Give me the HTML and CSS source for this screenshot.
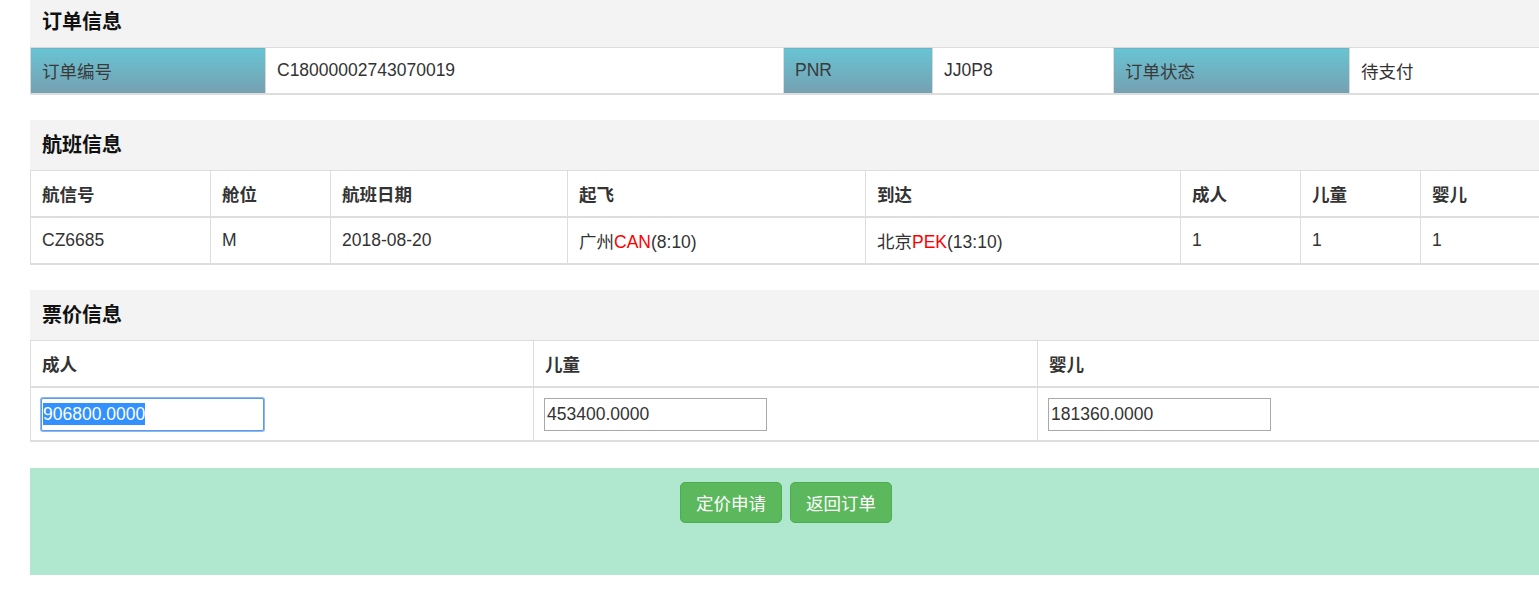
FILE: index.html
```html
<!DOCTYPE html>
<html lang="zh-CN">
<head>
<meta charset="utf-8">
<title>订单信息</title>
<link rel="stylesheet" href="styles.css">
</head>
<body>
<div class="page">
  <section class="panel first">
    <div class="panel-title">订单信息</div>
    <table class="grid order">
      <colgroup><col style="width:235px"><col style="width:518px"><col style="width:149px"><col style="width:181px"><col style="width:236px"><col style="width:193px"></colgroup>
      <tbody>
        <tr>
          <td class="label">订单编号</td><td>C18000002743070019</td>
          <td class="label">PNR</td><td>JJ0P8</td>
          <td class="label">订单状态</td><td>待支付</td>
        </tr>
      </tbody>
    </table>
  </section>

  <section class="panel">
    <div class="panel-title">航班信息</div>
    <table class="grid">
      <colgroup><col style="width:180px"><col style="width:120px"><col style="width:237px"><col style="width:298px"><col style="width:315px"><col style="width:120px"><col style="width:120px"><col style="width:122px"></colgroup>
      <thead>
        <tr><th>航信号</th><th>舱位</th><th>航班日期</th><th>起飞</th><th>到达</th><th>成人</th><th>儿童</th><th>婴儿</th></tr>
      </thead>
      <tbody>
        <tr>
          <td>CZ6685</td><td>M</td><td>2018-08-20</td>
          <td>广州<span class="red">CAN</span>(8:10)</td>
          <td>北京<span class="red">PEK</span>(13:10)</td>
          <td>1</td><td>1</td><td>1</td>
        </tr>
      </tbody>
    </table>
  </section>

  <section class="panel last">
    <div class="panel-title">票价信息</div>
    <table class="grid price">
      <colgroup><col style="width:503px"><col style="width:504px"><col style="width:505px"></colgroup>
      <thead>
        <tr><th>成人</th><th>儿童</th><th>婴儿</th></tr>
      </thead>
      <tbody>
        <tr>
          <td><div class="field focused"><span class="sel">906800.0000</span></div></td>
          <td><input class="field" type="text" value="453400.0000"></td>
          <td><input class="field" type="text" value="181360.0000"></td>
        </tr>
      </tbody>
    </table>
  </section>

  <div class="actions">
    <button class="btn" type="button">定价申请</button>
    <button class="btn" type="button">返回订单</button>
  </div>
</div>
</body>
</html>
```

FILE: styles.css
```css
html, body {
  margin: 0;
  padding: 0;
  background: #fff;
  overflow: hidden;
}

body {
  font-family: "Liberation Sans", "Noto Sans CJK SC", sans-serif;
  font-size: 17.5px;
  color: #333;
}

.page {
  width: 1512px;
  margin-left: 30px;
}

.panel {
  margin-bottom: 25px;
}

.panel.first {
  margin-top: -3px;
}

.panel.last {
  margin-bottom: 26px;
}

.panel-title {
  height: 50px;
  line-height: 50px;
  background: #f3f3f3;
  padding-left: 12px;
  font-size: 20px;
  font-weight: bold;
  color: #111;
}

.grid {
  width: 1512px;
  table-layout: fixed;
  border-collapse: collapse;
  border-bottom: 2px solid #ddd;
}

.grid th,
.grid td {
  border: 1px solid #ddd;
  height: 45px;
  padding: 0 11px;
  text-align: left;
  vertical-align: middle;
  white-space: nowrap;
  overflow: hidden;
}

.grid tr > :last-child {
  border-right: none;
}

.grid th {
  font-weight: bold;
  color: #333;
}

.grid thead th {
  border-bottom: 2px solid #ddd;
}

.grid tbody tr:last-child td {
  border-bottom: 2px solid #ddd;
}

.order td.label {
  background: linear-gradient(#67c4d4, #76a0b1);
  color: #3a3a3a;
  border-color: #d8d8d8;
}

.red {
  color: #f00;
}

.price tbody td {
  height: 52px;
  padding-left: 10px;
}

.field {
  box-sizing: border-box;
  display: block;
  width: 223px;
  height: 33px;
  margin: 0;
  padding: 0 2px;
  border: 1px solid #a9a9a9;
  background: #fff;
  font-family: "Liberation Sans", "Noto Sans CJK SC", sans-serif;
  font-size: 17.5px;
  line-height: 31px;
  color: #333;
  outline: none;
}

.field.focused {
  border: 1px solid #5b9bef;
  border-radius: 2px;
  box-shadow: 0 0 0 1px #8fb8f0;
  padding: 0 1px;
}

.sel {
  background: #3390ff;
  color: #fff;
  line-height: 22px;
  display: inline-block;
}

.actions {
  height: 107px;
  background: #b0e8cf;
  box-sizing: border-box;
  padding-top: 14px;
  display: flex;
  justify-content: center;
  align-items: flex-start;
  gap: 8px;
}

.btn {
  width: 102px;
  height: 41px;
  padding: 0;
  border: 1px solid #4cae4c;
  border-radius: 5px;
  background: #5cb85c;
  color: #fff;
  font-family: "Liberation Sans", "Noto Sans CJK SC", sans-serif;
  font-size: 17.5px;
  cursor: pointer;
}
```
